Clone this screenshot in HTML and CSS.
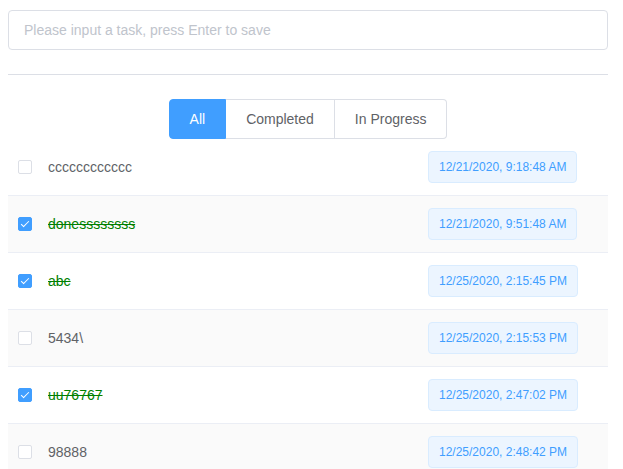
FILE: index.html
```html
<!DOCTYPE html>
<html>
<head>
<meta charset="utf-8">
<link rel="stylesheet" href="styles.css">
</head>
<body>
<div class="app">
  <input class="task-input" type="text" placeholder="Please input a task, press Enter to save">
  <div class="divider"></div>
  <div class="filters">
    <div class="btn-group">
      <button class="btn active">All</button>
      <button class="btn">Completed</button>
      <button class="btn">In Progress</button>
    </div>
  </div>
  <div class="table">
    <div class="row">
      <div class="cell sel"><span class="checkbox"></span></div>
      <div class="cell name">cccccccccccc</div>
      <div class="cell time"><span class="tag">12/21/2020, 9:18:48 AM</span></div>
    </div>
    <div class="row striped">
      <div class="cell sel"><span class="checkbox checked"></span></div>
      <div class="cell name done">donessssssss</div>
      <div class="cell time"><span class="tag">12/21/2020, 9:51:48 AM</span></div>
    </div>
    <div class="row">
      <div class="cell sel"><span class="checkbox checked"></span></div>
      <div class="cell name done">abc</div>
      <div class="cell time"><span class="tag">12/25/2020, 2:15:45 PM</span></div>
    </div>
    <div class="row striped">
      <div class="cell sel"><span class="checkbox"></span></div>
      <div class="cell name">5434\</div>
      <div class="cell time"><span class="tag">12/25/2020, 2:15:53 PM</span></div>
    </div>
    <div class="row">
      <div class="cell sel"><span class="checkbox checked"></span></div>
      <div class="cell name done">uu76767</div>
      <div class="cell time"><span class="tag">12/25/2020, 2:47:02 PM</span></div>
    </div>
    <div class="row striped">
      <div class="cell sel"><span class="checkbox"></span></div>
      <div class="cell name">98888</div>
      <div class="cell time"><span class="tag">12/25/2020, 2:48:42 PM</span></div>
    </div>
  </div>
</div>
</body>
</html>
```
FILE: styles.css
```css
html, body {
  margin: 0;
  padding: 0;
  background: #fff;
}
body {
  padding: 8px;
  font-family: "Liberation Sans", Arial, Helvetica, sans-serif;
  font-size: 14px;
  color: #606266;
}
.app {
  width: 600px;
  padding-top: 2px;
}
.task-input {
  display: block;
  box-sizing: border-box;
  width: 600px;
  height: 40px;
  margin: 0;
  padding: 0 15px;
  border: 1px solid #dcdfe6;
  border-radius: 4px;
  font-family: inherit;
  font-size: 14px;
  color: #606266;
  outline: none;
}
.task-input::placeholder {
  color: #c0c4cc;
}
.divider {
  height: 1px;
  background: #dcdfe6;
  margin: 24px 0;
}
.filters {
  display: flex;
  justify-content: center;
}
.btn-group {
  display: flex;
}
.btn {
  box-sizing: border-box;
  height: 40px;
  margin: 0;
  padding: 0 20px;
  font-family: inherit;
  font-size: 14px;
  line-height: 1;
  color: #606266;
  background: #fff;
  border: 1px solid #dcdfe6;
  border-left-width: 0;
}
.btn:first-child {
  border-left-width: 1px;
  border-radius: 4px 0 0 4px;
}
.btn:last-child {
  border-radius: 0 4px 4px 0;
}
.btn.active {
  background: #409eff;
  border-color: #409eff;
  color: #fff;
}
.table {
  width: 600px;
}
.row {
  display: flex;
  align-items: center;
  height: 56px;
  border-bottom: 1px solid #ebeef5;
  background: #fff;
}
.row.striped {
  background: #fafafa;
}
.cell {
  box-sizing: border-box;
  flex-shrink: 0;
  padding: 0 10px;
}
.sel {
  width: 30px;
  padding: 0 0 0 10px;
  display: flex;
  align-items: center;
}
.name {
  width: 380px;
  line-height: 23px;
}
.name.done {
  color: green;
  text-decoration: line-through;
}
.time {
  width: 190px;
  display: flex;
}
.checkbox {
  position: relative;
  display: inline-block;
  flex-shrink: 0;
  box-sizing: border-box;
  width: 14px;
  height: 14px;
  border: 1px solid #dcdfe6;
  border-radius: 2px;
  background: #fff;
}
.checkbox.checked {
  background: #409eff;
  border-color: #409eff;
}
.checkbox.checked::after {
  content: "";
  position: absolute;
  left: 4px;
  top: 1px;
  width: 3px;
  height: 7px;
  border: 1px solid #fff;
  border-left: 0;
  border-top: 0;
  transform: rotate(45deg);
}
.tag {
  display: inline-block;
  box-sizing: border-box;
  height: 32px;
  padding: 0 10px;
  line-height: 30px;
  font-size: 12px;
  color: #409eff;
  background: #ecf5ff;
  border: 1px solid #d9ecff;
  border-radius: 4px;
  white-space: nowrap;
}
```
